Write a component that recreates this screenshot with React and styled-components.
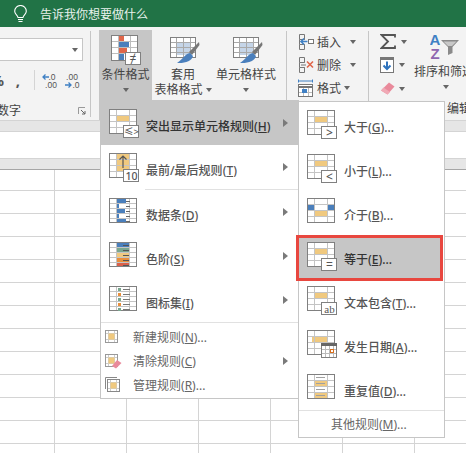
import styled, { createGlobalStyle } from 'styled-components';

const GlobalStyle = createGlobalStyle`
  html, body {
    margin: 0;
    padding: 0;
    background: #fff;
  }
  * {
    box-sizing: border-box;
  }
`;

const FONT = `"Noto Sans", "Noto Sans CJK SC", sans-serif`;
const ORANGE = '#f0c97f';
const BLUE = '#4a7fbc';
const RED = '#e0674a';
const LINE = '#808080';

const Page = styled.div`
  position: relative;
  width: 466px;
  height: 453px;
  overflow: hidden;
  display: flex;
  flex-direction: column;
  background: #fff;
  font-family: ${FONT};
  font-size: 12px;
  color: #444;
`;

/* title strip */
const TellBar = styled.div`
  height: 27px;
  flex: none;
  display: flex;
  align-items: center;
  gap: 13px;
  padding-left: 14px;
  background: #217346;
  color: #e8f1ec;
`;

/* ribbon */
const Ribbon = styled.div`
  height: 94px;
  flex: none;
  display: flex;
  align-items: flex-start;
  background: #f3f3f3;
  border-bottom: 1px solid #d4d4d4;
  overflow: hidden;
`;
const Divider = styled.div`
  width: 1px;
  height: 86px;
  flex: none;
  margin-top: 4px;
  background: #c6c6c6;
`;
const NumberGroup = styled.div`
  position: relative;
  width: 90px;
  height: 93px;
  flex: none;
  overflow: hidden;
  padding-top: 11px;
`;
const Combo = styled.div`
  width: 85px;
  height: 23px;
  margin-left: -2px;
  padding-right: 4px;
  display: flex;
  align-items: center;
  justify-content: flex-end;
  background: #fff;
  border: 1px solid #c6c6c6;
`;
const FormatRow = styled.div`
  height: 20px;
  margin-top: 9px;
  display: flex;
  align-items: center;
`;
const Glyph = styled.span`
  width: ${({ $w }) => $w}px;
  flex: none;
  display: flex;
  justify-content: ${({ $end }) => ($end ? 'flex-end' : 'center')};
  overflow: hidden;
  font-size: 15px;
  font-weight: 700;
  line-height: 20px;
  color: #555;
`;
const FormatSep = styled.div`
  width: 1px;
  height: 20px;
  margin: 0 7px 0 2px;
  background: #d4d4d4;
`;
const FormatGap = styled.div`
  width: 6px;
  flex: none;
`;
const GroupLabel = styled.div`
  line-height: 16px;
  white-space: nowrap;
  color: #444;
`;
const NumberFoot = styled.div`
  margin-top: 13px;
  margin-left: -3px;
  padding-right: 4px;
  display: flex;
  align-items: center;
  justify-content: space-between;
`;
const StyleGroup = styled.div`
  width: 195px;
  height: 93px;
  flex: none;
  padding: 3px 0 0 8px;
  display: flex;
  align-items: flex-start;
`;
const BigButton = styled.div`
  width: ${({ $w }) => $w}px;
  height: ${({ $active }) => ($active ? '90px' : '72px')};
  flex: none;
  display: flex;
  flex-direction: column;
  align-items: center;
  padding-top: 5px;
  background: ${({ $active }) => ($active ? '#c6c6c6' : 'transparent')};
  white-space: nowrap;
`;
const ButtonIcon = styled.div`
  height: 30px;
  margin-bottom: 2px;
  margin-left: ${({ $shift }) => $shift || 0}px;
  flex: none;
`;
const ButtonLine = styled.div`
  height: 15px;
  line-height: 15px;
  display: flex;
  align-items: center;
  justify-content: center;
  gap: 3px;
`;
const Caret = styled.i`
  display: block;
  width: 0;
  height: 0;
  flex: none;
  margin-left: ${({ $left }) => $left || 0}px;
  border-left: 3.5px solid transparent;
  border-right: 3.5px solid transparent;
  border-top: 4px solid #666;
`;
const CellGroup = styled.div`
  width: 81px;
  flex: none;
  padding: 3px 0 0 11px;
`;
const CellRow = styled.div`
  height: 23px;
  display: flex;
  align-items: center;
  gap: 3px;
  white-space: nowrap;
`;
const EditGroup = styled.div`
  height: 93px;
  flex: none;
  display: flex;
  flex-direction: column;
`;
const EditTop = styled.div`
  display: flex;
  height: 74px;
`;
const EditColumn = styled.div`
  width: 45px;
  flex: none;
  padding: 3px 0 0 11px;
`;
const EditRow = styled.div`
  height: ${({ $h }) => $h}px;
  display: flex;
  align-items: center;
  gap: 4px;
`;
const EditLabel = styled(GroupLabel)`
  margin-left: 78px;
`;

/* formula strip and sheet */
const Strip = styled.div`
  height: 11px;
  flex: none;
  background: #e6e6e6;
  border-bottom: 1px solid ${({ $dark }) => ($dark ? '#a6a6a6' : '#d4d4d4')};
`;
const FormulaBar = styled.div`
  height: 27px;
  flex: none;
  background: #fff;
  border-bottom: 1px solid #d4d4d4;
`;
const Sheet = styled.div`
  display: grid;
  grid-template-columns: 55px repeat(6, 72px);
  grid-template-rows: 21px;
  grid-auto-rows: 23px;
`;
const Cell = styled.div`
  border-right: 1px solid #d4d4d4;
  border-bottom: 1px solid #d4d4d4;
`;

/* conditional formatting menus */
const MainMenu = styled.div`
  position: absolute;
  left: 100px;
  top: 100px;
  width: 199px;
  background: #fff;
  border: 1px solid #c6c6c6;
  padding-bottom: 1px;
`;
const SubMenu = styled.div`
  position: absolute;
  left: 298px;
  top: 101px;
  width: 147px;
  background: #fff;
  border: 1px solid #c6c6c6;
  z-index: 2;
`;
const BigRow = styled.div`
  position: relative;
  isolation: isolate;
  height: 44px;
  display: flex;
  align-items: center;
  padding: 0 10px 0 8px;
  background: ${({ $active }) => ($active ? '#c6c6c6' : 'transparent')};
  font-weight: 500;
  color: ${({ $active }) => ($active ? '#333' : '#555')};
  white-space: nowrap;
  ${({ $selected }) =>
    $selected &&
    `
    color: #333;
    &::after {
      content: '';
      position: absolute;
      z-index: -1;
      left: -3px;
      right: 1px;
      top: 1px;
      bottom: -3px;
      background: #c6c6c6;
      border: 3px solid #e8473f;
    }
  `}
`;
const IconCell = styled.div`
  width: 37px;
  height: 30px;
  flex: none;
  padding-top: 1px;
`;
const RowLabel = styled.div`
  flex: 1;
  padding-top: 8px;
  line-height: 16px;
`;
const Arrow = styled.i`
  display: block;
  width: 0;
  height: 0;
  flex: none;
  border-top: 4px solid transparent;
  border-bottom: 4px solid transparent;
  border-left: 5px solid #7a7a7a;
`;
const MenuSep = styled.div`
  height: 1px;
  margin-left: ${({ $indent }) => $indent || 0}px;
  background: #e1e1e1;
`;
const SmallList = styled.div`
  padding-top: 2px;
`;
const SmallRow = styled.div`
  height: 24px;
  display: flex;
  align-items: center;
  padding: 0 10px 0 4px;
  color: #666;
  white-space: nowrap;
`;
const SmallIcon = styled.div`
  width: 28px;
  height: 16px;
  flex: none;
`;
const SmallLabel = styled.div`
  flex: 1;
  padding-top: 2px;
  line-height: 16px;
`;
const MoreRow = styled.div`
  height: 26px;
  line-height: 28px;
  padding-left: 32px;
  color: #666;
`;

/* drawings */
const Svg = ({ w = 32, h = 30, children }) => (
  <svg width={w} height={h} viewBox={`0 0 ${w} ${h}`} style={{ display: 'block' }}>
    {children}
  </svg>
);

const Sketch = ({ fills, cols = [7.5, 20.5], rows = [6.5, 12.5, 18.5], children }) => (
  <Svg>
    <rect x="0.5" y="0.5" width="27" height="24" fill="#fff" />
    {fills}
    <g stroke="#c4c4c4" fill="none">
      {cols.map((x) => (
        <path key={x} d={`M${x} 1V24`} />
      ))}
      {rows.map((y) => (
        <path key={y} d={`M1 ${y}H27`} />
      ))}
    </g>
    <rect x="0.5" y="0.5" width="27" height="24" fill="none" stroke={LINE} />
    {children}
  </Svg>
);

const Badge = ({ text, size = 11, family = FONT, x = 22.5, y = 26.5 }) => (
  <g>
    <rect x="14.5" y="16.5" width="15" height="12" fill="#fff" stroke={LINE} />
    <text x={x} y={y} fontSize={size} fontFamily={family} fill="#555" textAnchor="middle">
      {text}
    </text>
  </g>
);

const MidBlock = () => <rect x="7" y="6" width="14" height="7" fill={ORANGE} />;

const stripes = [0, 5, 10, 15, 20];
const barWidths = [10, 3, 9, 3, 10];
const scaleColors = [BLUE, '#7aa78f', ORANGE, '#e98f3c', '#d9604a'];
const dotColors = ['#7aa78f', '#e98f3c', '#7aa78f', '#e98f3c', '#7aa78f'];

const DataBarIcon = () => (
  <Sketch
    rows={[5.5, 10.5, 15.5, 20.5]}
    fills={stripes.map((y, i) => (
      <rect key={y} x="7" y={y + 1} width={barWidths[i]} height="4" fill={BLUE} />
    ))}
  >
    {stripes.map((y) => (
      <path key={y} d={`M17 ${y + 3.5}H21`} stroke="#666" />
    ))}
  </Sketch>
);

const ScaleIcon = () => (
  <Sketch
    rows={[5.5, 10.5, 15.5, 20.5]}
    fills={stripes.map((y, i) => (
      <rect key={y} x="7" y={y + 1} width="14" height="4" fill={scaleColors[i]} />
    ))}
  >
    {stripes.map((y) => (
      <path key={y} d={`M14 ${y + 3.5}H20`} stroke="#555" />
    ))}
  </Sketch>
);

const IconSetIcon = () => (
  <Sketch rows={[5.5, 10.5, 15.5, 20.5]}>
    {stripes.map((y, i) => (
      <g key={y}>
        <rect x="9" y={y + 2} width="3" height="3" fill={dotColors[i]} />
        <path d={`M14 ${y + 3.5}H21`} stroke="#777" />
      </g>
    ))}
  </Sketch>
);

const TopTenIcon = () => (
  <Sketch fills={<rect x="7" y="1" width="14" height="18" fill={ORANGE} />}>
    <path d="M14 15V3M10.5 6.5L14 3L17.5 6.5" fill="none" stroke="#555" strokeWidth="1.2" />
    <Badge text="10" size={10.5} />
  </Sketch>
);

const BetweenIcon = () => (
  <Sketch
    fills={
      <>
        <rect x="1" y="7" width="6" height="5" fill={BLUE} />
        <rect x="21" y="7" width="6" height="5" fill={BLUE} />
        <rect x="7" y="13" width="14" height="5" fill={ORANGE} />
      </>
    }
  />
);

const DateIcon = () => (
  <Sketch fills={<rect x="5" y="6" width="16" height="6" fill={ORANGE} />}>
    <rect x="14.5" y="13.5" width="15" height="14" fill="#fff" stroke={LINE} />
    <rect x="14" y="13" width="16" height="3" fill="#666" />
    <path d="M18.5 16V27M22.5 16V27M26.5 16V27M15 19.5H29M15 23.5H29" stroke="#bbb" />
    <rect x="23.5" y="19.5" width="3" height="3" fill="#fff" stroke="#d9701f" />
  </Sketch>
);

const DuplicateIcon = () => (
  <Sketch
    fills={
      <>
        <rect x="7" y="7" width="14" height="5" fill={ORANGE} />
        <rect x="7" y="19" width="14" height="5" fill={ORANGE} />
      </>
    }
  >
    <path d="M9 3.5H18M9 9.5H18M9 15.5H18M9 21.5H18" stroke="#a0a0a0" />
  </Sketch>
);

const CondIcon = () => (
  <Svg h={31}>
    <rect x="0.5" y="0.5" width="26" height="25" fill="#fff" />
    <rect x="7" y="1" width="6" height="6" fill={RED} />
    <rect x="7" y="7" width="11" height="5" fill={BLUE} />
    <rect x="7" y="13" width="9" height="5" fill={RED} />
    <rect x="7" y="19" width="6" height="6" fill={BLUE} />
    <path d="M7.5 1V25M19.5 1V25M1 6.5H26M1 12.5H26M1 18.5H26" stroke="#bdbdbd" fill="none" />
    <rect x="0.5" y="0.5" width="26" height="25" fill="none" stroke={LINE} />
    <rect x="14.5" y="17.5" width="15" height="12" fill="#fff" stroke={LINE} />
    <text x="22" y="28" fontSize="12" fontFamily={FONT} fill="#555" textAnchor="middle">≠</text>
  </Svg>
);

const TableStyleIcon = ({ tipX = 7 }) => (
  <Svg w={32} h={31}>
    <rect x="0.5" y="2.5" width="25" height="20" fill="#fff" />
    <rect x="6" y="7" width="15" height="13" fill="#c5d5e8" />
    <path d="M6.5 3V22M13.5 3V22M20.5 3V22M1 7.5H25M1 12.5H25M1 17.5H25" stroke="#a9a9a9" fill="none" />
    <rect x="0.5" y="2.5" width="25" height="20" fill="none" stroke={LINE} />
    <path d="M29 7L19 17L22 20L29.5 10Z" fill="#777" />
    <path d={`M${tipX + 13} 18C${tipX + 8} 19 ${tipX + 7} 23 ${tipX} 28C${tipX + 8} 28.5 ${tipX + 15} 26 ${tipX + 16} 21Z`} fill={BLUE} />
  </Svg>
);

const InsertIcon = () => (
  <Svg w={16} h={18}>
    <path d="M1.5 1.5H6.5V6.5H1.5ZM1.5 11.5H6.5V16.5H1.5ZM1.5 6.5V11.5M6.5 6.5V7M6.5 11V11.5" fill="none" stroke="#777" />
    <rect x="10.5" y="6.5" width="5" height="4" fill="#fff" stroke="#777" />
    <path d="M9.5 8.5H3M6 5.5L3 8.5L6 11.5" fill="none" stroke="#3f80c4" strokeWidth="1.6" />
  </Svg>
);

const DeleteIcon = () => (
  <Svg w={16} h={18}>
    <path d="M1.5 1.5H6.5V6.5H1.5ZM1.5 11.5H6.5V16.5H1.5ZM1.5 6.5V11.5M6.5 6.5V7M6.5 11V11.5M3 9H8" fill="none" stroke="#777" />
    <path d="M9 5.5L15 11.5M15 5.5L9 11.5" stroke="#e0674a" strokeWidth="1.6" />
  </Svg>
);

const FormatIcon = () => (
  <Svg w={16} h={18}>
    <path d="M0.5 0.5V3.5M14.5 0.5V3.5M1 2H14" stroke="#3f80c4" />
    <rect x="0.5" y="5.5" width="14" height="12" fill="#fff" stroke="#777" />
    <path d="M0.5 8H14.5" stroke="#777" strokeWidth="2" />
    <path d="M5.5 9V17M10.5 9V17M1 13.5H14" stroke="#bbb" />
    <rect x="4" y="10" width="5" height="4" fill="#3f80c4" />
  </Svg>
);

const SigmaIcon = () => (
  <Svg w={16} h={15}>
    <path d="M15 3.5V1H1.5L8 7.5L1.5 14H15V11.5" fill="none" stroke="#555" strokeWidth="1.8" />
  </Svg>
);

const FillIcon = () => (
  <Svg w={15} h={16}>
    <rect x="0.5" y="0.5" width="13" height="15" fill="#fff" stroke="#777" />
    <rect x="0" y="0" width="14" height="3" fill="#777" />
    <path d="M7 4.5V12M3.5 8.5L7 12L10.5 8.5" fill="none" stroke="#2f73bd" strokeWidth="2" />
  </Svg>
);

const EraserIcon = ({ w = 15, h = 13 }) => (
  <Svg w={w} h={h}>
    <path d="M9 0.5L14.5 4.5L7.5 12.5L1 8.5Z" fill="#e98a9b" />
    <path d="M1 8.5L3.5 5.5L10 10L7.5 12.5Z" fill="#f0a9b5" />
  </Svg>
);

const SortIcon = () => (
  <Svg w={32} h={28}>
    <text x="5" y="13" fontSize="15" fontWeight="700" fontFamily="Liberation Sans" fill="#3f80c4" textAnchor="middle">A</text>
    <text x="5" y="27" fontSize="15" fontWeight="700" fontFamily="Liberation Sans" fill="#8f66b0" textAnchor="middle">Z</text>
    <path d="M11 8H29L22.5 15V21L18 23V15Z" fill="#8a8a8a" />
    <path d="M13.5 9.5H26.5L22 14H18Z" fill="#c8c8c8" />
  </Svg>
);

const BulbIcon = () => (
  <svg width="13" height="18" viewBox="0 0 13 18" style={{ display: 'block' }}>
    <path d="M4 12.5C3.5 10 .7 9.5 .7 6.3A5.8 5.8 0 0 1 12.3 6.3C12.3 9.5 9.5 10 9 12.5Z" fill="none" stroke="#fff" strokeWidth="1.1" />
    <path d="M4 14.5H9M4.5 16.5H8.5" stroke="#fff" strokeWidth="1.1" />
  </svg>
);

const DecreaseIcon = () => (
  <Svg w={16} h={17}>
    <text x="10" y="8" fontSize="8.5" fontFamily="Liberation Sans" fill="#555" textAnchor="middle">.0</text>
    <text x="9" y="16" fontSize="8.5" fontFamily="Liberation Sans" fill="#555" textAnchor="middle">.00</text>
    <path d="M7 5H1M3.5 2.5L1 5L3.5 7.5" fill="none" stroke="#3f80c4" strokeWidth="1.3" />
  </Svg>
);

const IncreaseIcon = () => (
  <Svg w={16} h={17}>
    <text x="8" y="8" fontSize="8.5" fontFamily="Liberation Sans" fill="#555" textAnchor="middle">.00</text>
    <text x="12" y="16" fontSize="8.5" fontFamily="Liberation Sans" fill="#555" textAnchor="middle">.0</text>
    <path d="M1 13H7M4.5 10.5L7 13L4.5 15.5" fill="none" stroke="#3f80c4" strokeWidth="1.3" />
  </Svg>
);

const LauncherIcon = () => (
  <Svg w={8} h={8}>
    <path d="M.5 7V.5H7" fill="none" stroke="#999" />
    <path d="M3 3L7 7M7 4V7H4" fill="none" stroke="#666" />
  </Svg>
);

const TinyGrid = ({ children }) => (
  <Svg w={18} h={16}>
    <rect x="0.5" y="1.5" width="12" height="12" fill="#fff" stroke="#999" />
    <path d="M3.5 2V13M9.5 2V13M1 4.5H12M1 10.5H12" stroke="#ccc" />
    <rect x="3.5" y="4.5" width="6" height="6" fill={ORANGE} />
    {children}
  </Svg>
);

const ManageIcon = () => (
  <Svg w={18} h={16}>
    <path d="M0.5 12V.5H12" fill="none" stroke="#888" />
    <rect x="2.5" y="2.5" width="12" height="12" fill="#fff" stroke="#888" />
    <path d="M5.5 3V14M11.5 3V14M3 5.5H14M3 11.5H14" stroke="#ccc" />
    <rect x="5.5" y="5.5" width="6" height="6" fill={ORANGE} />
  </Svg>
);

const mainItems = [
  { icon: <Sketch fills={<MidBlock />}><Badge text="≤>" size={9.5} y={26} /></Sketch>, name: '突出显示单元格规则', key: 'H', active: true },
  { icon: <TopTenIcon />, name: '最前/最后规则', key: 'T' },
  { icon: <DataBarIcon />, name: '数据条', key: 'D', sep: true },
  { icon: <ScaleIcon />, name: '色阶', key: 'S' },
  { icon: <IconSetIcon />, name: '图标集', key: 'I' },
];

const smallItems = [
  { icon: <TinyGrid />, name: '新建规则', key: 'N', tail: '...' },
  {
    icon: (
      <TinyGrid>
        <path d="M12 7L16.5 10L11 15.5L7 13Z" fill="#e98a9b" />
      </TinyGrid>
    ),
    name: '清除规则',
    key: 'C',
    more: true,
  },
  { icon: <ManageIcon />, name: '管理规则', key: 'R', tail: '...' },
];

const subItems = [
  { icon: <Sketch fills={<MidBlock />}><Badge text=">" size={12} y={27} /></Sketch>, name: '大于', key: 'G' },
  { icon: <Sketch fills={<MidBlock />}><Badge text="<" size={12} y={27} /></Sketch>, name: '小于', key: 'L' },
  { icon: <BetweenIcon />, name: '介于', key: 'B' },
  { icon: <Sketch fills={<MidBlock />}><Badge text="=" size={12} y={27} /></Sketch>, name: '等于', key: 'E', selected: true },
  { icon: <Sketch fills={<MidBlock />}><Badge text="ab" size={11} family="Liberation Serif" y={27} /></Sketch>, name: '文本包含', key: 'T' },
  { icon: <DateIcon />, name: '发生日期', key: 'A' },
  { icon: <DuplicateIcon />, name: '重复值', key: 'D' },
];

const sheetCells = Array.from({ length: 7 * 13 }, (_, i) => i);

const App = () => {
  return (
    <Page>
      <GlobalStyle />
      <TellBar>
        <BulbIcon />
        <span>告诉我你想要做什么</span>
      </TellBar>

      <Ribbon>
        <NumberGroup>
          <Combo>
            <Caret />
          </Combo>
          <FormatRow>
            <Glyph $w={4} $end>%</Glyph>
            <Glyph $w={28}>,</Glyph>
            <FormatSep />
            <DecreaseIcon />
            <FormatGap />
            <IncreaseIcon />
          </FormatRow>
          <NumberFoot>
            <GroupLabel>数字</GroupLabel>
            <LauncherIcon />
          </NumberFoot>
        </NumberGroup>
        <Divider />

        <StyleGroup>
          <BigButton $w={53} $active>
            <ButtonIcon $shift={3}>
              <CondIcon />
            </ButtonIcon>
            <ButtonLine>条件格式</ButtonLine>
            <ButtonLine>
              <Caret />
            </ButtonLine>
          </BigButton>
          <BigButton $w={62}>
            <ButtonIcon $shift={6}>
              <TableStyleIcon />
            </ButtonIcon>
            <ButtonLine>套用</ButtonLine>
            <ButtonLine>
              表格格式
              <Caret />
            </ButtonLine>
          </BigButton>
          <BigButton $w={64}>
            <ButtonIcon $shift={6}>
              <TableStyleIcon />
            </ButtonIcon>
            <ButtonLine>单元格样式</ButtonLine>
            <ButtonLine>
              <Caret />
            </ButtonLine>
          </BigButton>
        </StyleGroup>
        <Divider />

        <CellGroup>
          <CellRow>
            <InsertIcon />
            插入
            <Caret $left={6} />
          </CellRow>
          <CellRow>
            <DeleteIcon />
            删除
            <Caret $left={6} />
          </CellRow>
          <CellRow>
            <FormatIcon />
            格式
            <Caret />
          </CellRow>
        </CellGroup>
        <Divider />

        <EditGroup>
          <EditTop>
            <EditColumn>
              <EditRow $h={23}>
                <SigmaIcon />
                <Caret $left={1} />
              </EditRow>
              <EditRow $h={24}>
                <FillIcon />
                <Caret />
              </EditRow>
              <EditRow $h={23}>
                <EraserIcon />
                <Caret />
              </EditRow>
            </EditColumn>
            <BigButton $w={60}>
              <ButtonIcon $shift={4}>
                <SortIcon />
              </ButtonIcon>
              <ButtonLine>排序和筛选</ButtonLine>
              <ButtonLine>
                <Caret $left={4} />
              </ButtonLine>
            </BigButton>
          </EditTop>
          <EditLabel>编辑</EditLabel>
        </EditGroup>
      </Ribbon>

      <Strip />
      <FormulaBar />
      <Strip $dark />
      <Sheet>
        {sheetCells.map((n) => (
          <Cell key={n} />
        ))}
      </Sheet>

      <MainMenu>
        {mainItems.map((item) => (
          <div key={item.name}>
            {item.sep && <MenuSep $indent={44} />}
            <BigRow $active={item.active}>
              <IconCell>{item.icon}</IconCell>
              <RowLabel>
                {item.name}(<u>{item.key}</u>)
              </RowLabel>
              <Arrow />
            </BigRow>
          </div>
        ))}
        <MenuSep />
        <SmallList>
          {smallItems.map((item) => (
            <SmallRow key={item.name}>
              <SmallIcon>{item.icon}</SmallIcon>
              <SmallLabel>
                {item.name}(<u>{item.key}</u>){item.tail}
              </SmallLabel>
              {item.more && <Arrow />}
            </SmallRow>
          ))}
        </SmallList>
      </MainMenu>

      <SubMenu>
        {subItems.map((item) => (
          <BigRow key={item.name} $selected={item.selected}>
            <IconCell>{item.icon}</IconCell>
            <RowLabel>
              {item.name}(<u>{item.key}</u>)...
            </RowLabel>
          </BigRow>
        ))}
        <MenuSep />
        <MoreRow>
          其他规则(<u>M</u>)...
        </MoreRow>
      </SubMenu>
    </Page>
  );
};

export default App;
